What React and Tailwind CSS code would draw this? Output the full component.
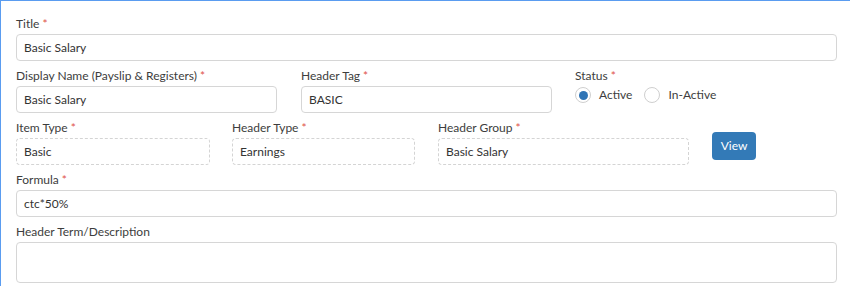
const font = { fontFamily: "Lato, 'Open Sans', sans-serif" };

function Label({ text, required }) {
  return (
    <label className="block h-4 mb-[2px] text-[12px] leading-4 text-[#3d3d3d]">
      {text}
      {required && <span className="ml-[3px] text-[#e0534a]">*</span>}
    </label>
  );
}

function Input({ value, dashed, className = "" }) {
  return (
    <div
      className={`h-[27px] rounded-[4px] border ${dashed ? "border-dashed border-[#d4d4d4]" : "border-[#d6d6d6]"} bg-white px-[7px] text-[12px] leading-[25px] text-[#333] ${className}`}
    >
      {value}
    </div>
  );
}

function Radio({ label, checked }) {
  return (
    <div className="flex items-center">
      <span className="grid h-4 w-4 place-items-center rounded-full border border-[#cfcfcf] bg-white">
        {checked && <span className="h-[9px] w-[9px] rounded-full bg-[#2f74b5]" />}
      </span>
      <span className="ml-2 text-[12px] text-[#3d3d3d]">{label}</span>
    </div>
  );
}

export default function App() {
  return (
    <div className="h-[286px] w-[850px] overflow-hidden bg-white" style={font}>
      <div className="h-full border-l border-t border-[#5a9cf0] pl-[15px] pr-[13px] pt-[15px]">
        <div className="flex flex-col gap-[7px]">
          <div>
            <Label text="Title" required />
            <Input value="Basic Salary" />
          </div>

          <div className="flex">
            <div className="w-[261px]">
              <Label text="Display Name (Payslip & Registers)" required />
              <Input value="Basic Salary" />
            </div>
            <div className="ml-[24px] w-[251px]">
              <Label text="Header Tag" required />
              <Input value="BASIC" />
            </div>
            <div className="ml-[23px]">
              <Label text="Status" required />
              <div className="mt-[2px] flex gap-[12px]">
                <Radio label="Active" checked />
                <Radio label="In-Active" />
              </div>
            </div>
          </div>

          <div className="flex">
            <div className="w-[194px]">
              <Label text="Item Type" required />
              <Input value="Basic" dashed />
            </div>
            <div className="ml-[22px] w-[183px]">
              <Label text="Header Type" required />
              <Input value="Earnings" dashed />
            </div>
            <div className="ml-[23px] w-[251px]">
              <Label text="Header Group" required />
              <Input value="Basic Salary" dashed />
            </div>
            <div className="ml-[23px] pt-[12px]">
              <button className="h-[28px] w-[44px] rounded-[4px] bg-[#337ab7] text-[12px] text-white">View</button>
            </div>
          </div>

          <div>
            <Label text="Formula" required />
            <Input value="ctc*50%" />
          </div>

          <div>
            <Label text="Header Term/Description" />
            <div className="h-[41px] rounded-[4px] border border-[#d6d6d6] bg-white" />
          </div>
        </div>
      </div>
    </div>
  );
}
